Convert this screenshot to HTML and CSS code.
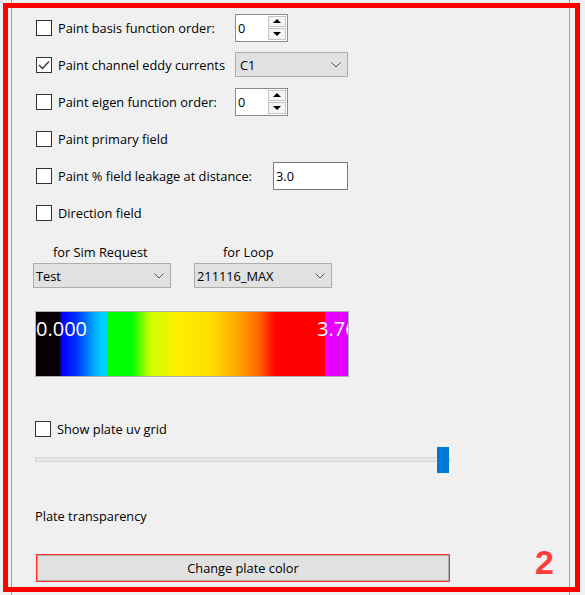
FILE: index.html
```html
<!DOCTYPE html>
<html>
<head>
<meta charset="utf-8">
<link rel="stylesheet" href="styles.css">
</head>
<body>
<div class="panel">
  <div class="opts">
    <div class="row">
      <label class="cb"><span class="box"></span><span class="lbl w1">Paint basis function order:</span></label>
      <div class="spin"><span class="val">0</span><span class="btns"><span class="up"></span><span class="dn"></span></span></div>
    </div>
    <div class="row">
      <label class="cb"><span class="box"><svg width="12" height="10" viewBox="0 0 12 10"><path d="M1 5 L4.5 8.5 L11 1.5" fill="none" stroke="#333" stroke-width="1.3"/></svg></span><span class="lbl w1">Paint channel eddy currents</span></label>
      <div class="combo c-c1"><span>C1</span><svg width="10" height="6" viewBox="0 0 10 6"><path d="M0.5 0.5 L5 5 L9.5 0.5" fill="none" stroke="#555"/></svg></div>
    </div>
    <div class="row">
      <label class="cb"><span class="box"></span><span class="lbl w1">Paint eigen function order:</span></label>
      <div class="spin"><span class="val">0</span><span class="btns"><span class="up"></span><span class="dn"></span></span></div>
    </div>
    <div class="row">
      <label class="cb"><span class="box"></span><span class="lbl">Paint primary field</span></label>
    </div>
    <div class="row">
      <label class="cb"><span class="box"></span><span class="lbl w2">Paint % field leakage at distance:</span></label>
      <div class="field">3.0</div>
    </div>
    <div class="row">
      <label class="cb"><span class="box"></span><span class="lbl">Direction field</span></label>
    </div>
  </div>

  <div class="req">
    <div class="col">
      <div class="cap cap1">for Sim Request</div>
      <div class="combo c-wide"><span>Test</span><svg width="10" height="6" viewBox="0 0 10 6"><path d="M0.5 0.5 L5 5 L9.5 0.5" fill="none" stroke="#555"/></svg></div>
    </div>
    <div class="col">
      <div class="cap cap2">for Loop</div>
      <div class="combo c-wide"><span>211116_MAX</span><svg width="10" height="6" viewBox="0 0 10 6"><path d="M0.5 0.5 L5 5 L9.5 0.5" fill="none" stroke="#555"/></svg></div>
    </div>
  </div>

  <div class="bar"><span class="lo">0.000</span><span class="hi">3.76</span></div>

  <label class="cb uv"><span class="box"></span><span class="lbl">Show plate uv grid</span></label>

  <div class="slider"><div class="track"></div><div class="handle"></div></div>

  <div class="plate">Plate transparency</div>

  <div class="btnrow">
    <div class="btn">Change plate color</div>
    <div class="badge">2</div>
  </div>
</div>
<div class="frame"></div>
</body>
</html>
```
FILE: styles.css
```css
body {
  margin: 0;
  background: #f0f0f0;
  font-family: "Open Sans", "Noto Sans", sans-serif;
  font-size: 12.8px;
  color: #000;
  width: 585px;
  height: 595px;
  overflow: hidden;
  position: relative;
}

.panel {
  margin-left: 11px;
  width: 557px;
  height: 595px;
  border-left: 1px solid #a0a0a0;
  border-right: 1px solid #a0a0a0;
}

.opts {
  padding: 9px 0 0 24px;
}

.row {
  height: 37px;
  display: flex;
  align-items: center;
}

.cb {
  display: flex;
  align-items: center;
  gap: 6px;
}

.box {
  width: 16px;
  height: 16px;
  box-sizing: border-box;
  border: 1px solid #333;
  background: #fff;
  display: flex;
  align-items: center;
  justify-content: center;
}

.lbl {
  line-height: 16px;
  white-space: nowrap;
}

.w1 { width: 177px; }
.w2 { width: 215px; }

.spin {
  width: 53px;
  height: 28px;
  box-sizing: border-box;
  border: 1px solid #8c8c8c;
  background: #fff;
  display: flex;
}

.spin .val {
  flex: 1;
  padding-left: 2px;
  line-height: 26px;
}

.btns {
  width: 18px;
  display: flex;
  flex-direction: column;
  gap: 1px;
  padding: 1px 1px 1px 0;
}

.btns span {
  flex: 1;
  border: 1px solid #c4c4c4;
  background: #f5f5f5;
  display: flex;
  align-items: center;
  justify-content: center;
}

.btns .up::after {
  content: "";
  width: 0;
  height: 0;
  border-left: 4px solid transparent;
  border-right: 4px solid transparent;
  border-bottom: 4px solid #000;
}

.btns .dn::after {
  content: "";
  width: 0;
  height: 0;
  border-left: 4px solid transparent;
  border-right: 4px solid transparent;
  border-top: 4px solid #000;
}

.combo {
  height: 25px;
  box-sizing: border-box;
  border: 1px solid #adadad;
  background: #e1e1e1;
  display: flex;
  align-items: center;
  justify-content: space-between;
  padding: 0 6px 0 4px;
}

.c-c1 { width: 113px; }
.c-wide { width: 138px; padding-left: 2px; }

.field {
  width: 75px;
  height: 28px;
  box-sizing: border-box;
  border: 1px solid #7a7a7a;
  background: #fff;
  padding-left: 2px;
  line-height: 26px;
}

.req {
  display: flex;
  gap: 23px;
  margin: 13px 0 0 21px;
}

.cap {
  line-height: 16px;
  margin-bottom: 3px;
}

.cap1 { padding-left: 20px; }
.cap2 { padding-left: 29px; }

.bar {
  position: relative;
  overflow: hidden;
  margin: 23px 0 0 23px;
  width: 314px;
  height: 66px;
  box-sizing: border-box;
  border: 1px solid #b0b0b0;
  background: linear-gradient(to right,
    #050000 0px, #0a0000 23px, #0000ff 26px, #0030ff 40px,
    #00a8ff 58px, #00d2ff 66px, #00d2ff 71px, #00ff00 71px,
    #00ff00 96px, #ccff00 114px, #ffee00 142px, #ffdd00 176px,
    #ffaa00 200px, #ff6a00 222px, #ff0000 240px, #ff0000 289px,
    #ee00ff 289px, #dd00ff 312px);
}

.lo, .hi {
  position: absolute;
  top: 7px;
  font-size: 20px;
  line-height: 20px;
  color: #fff;
  white-space: nowrap;
}

.lo { left: 0; }
.hi { left: 281px; }

.uv {
  margin: 42px 0 0 23px;
  height: 20px;
}

.slider {
  position: relative;
  margin: 8px 0 0 23px;
  width: 415px;
  height: 26px;
}

.track {
  position: relative;
  top: 10px;
  height: 5px;
  box-sizing: border-box;
  background: #e7e7e7;
  border: 1px solid #d6d6d6;
}

.handle {
  position: absolute;
  left: 402px;
  top: 0;
  width: 12px;
  height: 26px;
  background: #0078d7;
}

.plate {
  margin: 35px 0 0 23px;
  line-height: 16px;
}

.btnrow {
  display: flex;
  align-items: flex-start;
  margin-top: 30px;
  padding-left: 24px;
}

.btn {
  width: 414px;
  height: 28px;
  box-sizing: border-box;
  border: 1px solid #ff3030;
  background: #e1e1e1;
  box-shadow: inset 0 0 0 1px #adadad;
  display: flex;
  align-items: center;
  justify-content: center;
}

.badge {
  margin: -9px 0 0 85px;
  font: bold 34px/34px "Liberation Sans", Arial, sans-serif;
  color: #ff3c3c;
}

.frame {
  position: absolute;
  left: 3px;
  top: 3px;
  width: 577px;
  height: 589px;
  box-sizing: border-box;
  border: 5px solid #ff0000;
  pointer-events: none;
}
```
